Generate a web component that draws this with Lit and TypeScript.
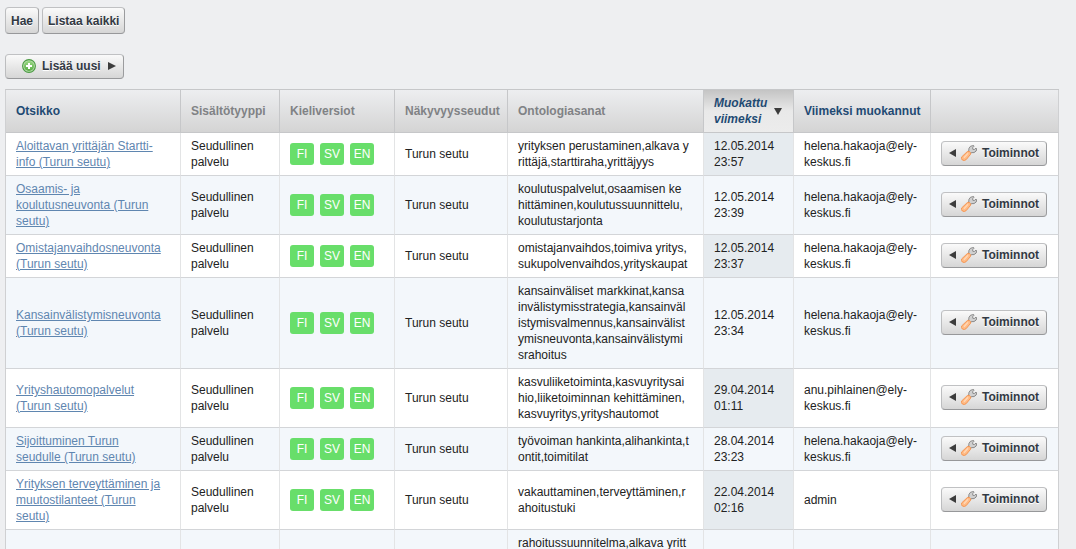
import { LitElement, html, css, svg } from "lit";
import { customElement, property } from "lit/decorators.js";

interface Service {
  title: string[];
  words: string[];
  modified?: string[];
  editor?: string[];
}

const helena = ["helena.hakaoja@ely-", "keskus.fi"];

const services: Service[] = [
  {
    title: ["Aloittavan yrittäjän Startti-", "info (Turun seutu)"],
    words: ["yrityksen perustaminen,alkava y", "rittäjä,starttiraha,yrittäjyys"],
    modified: ["12.05.2014", "23:57"],
    editor: helena,
  },
  {
    title: ["Osaamis- ja", "koulutusneuvonta (Turun", "seutu)"],
    words: ["koulutuspalvelut,osaamisen ke", "hittäminen,koulutussuunnittelu,", "koulutustarjonta"],
    modified: ["12.05.2014", "23:39"],
    editor: helena,
  },
  {
    title: ["Omistajanvaihdosneuvonta", "(Turun seutu)"],
    words: ["omistajanvaihdos,toimiva yritys,", "sukupolvenvaihdos,yrityskaupat"],
    modified: ["12.05.2014", "23:37"],
    editor: helena,
  },
  {
    title: ["Kansainvälistymisneuvonta", "(Turun seutu)"],
    words: [
      "kansainväliset markkinat,kansa",
      "invälistymisstrategia,kansainväl",
      "istymisvalmennus,kansainvälist",
      "ymisneuvonta,kansainvälistymi",
      "srahoitus",
    ],
    modified: ["12.05.2014", "23:34"],
    editor: helena,
  },
  {
    title: ["Yrityshautomopalvelut", "(Turun seutu)"],
    words: ["kasvuliiketoiminta,kasvuyritysai", "hio,liiketoiminnan kehittäminen,", "kasvuyritys,yrityshautomot"],
    modified: ["29.04.2014", "01:11"],
    editor: ["anu.pihlainen@ely-", "keskus.fi"],
  },
  {
    title: ["Sijoittuminen Turun", "seudulle (Turun seutu)"],
    words: ["työvoiman hankinta,alihankinta,t", "ontit,toimitilat"],
    modified: ["28.04.2014", "23:23"],
    editor: helena,
  },
  {
    title: ["Yrityksen terveyttäminen ja", "muutostilanteet (Turun", "seutu)"],
    words: ["vakauttaminen,terveyttäminen,r", "ahoitustuki"],
    modified: ["22.04.2014", "02:16"],
    editor: ["admin"],
  },
];

const lines = (parts: string[] = []) => parts.map((part, i) => (i ? html`<br />${part}` : part));

const plusIcon = svg`<svg width="14" height="14" viewBox="0 0 14 14" aria-hidden="true">
  <defs><linearGradient id="g" x1="0" y1="0" x2="0" y2="1"><stop offset="0" stop-color="#9ad884"/><stop offset="1" stop-color="#57ac44"/></linearGradient></defs>
  <circle cx="7" cy="7" r="6.4" fill="#b9dfae" stroke="#4a9a42" stroke-width="1.1"/>
  <circle cx="7" cy="7" r="5" fill="url(#g)"/>
  <path d="M7 4v6M4 7h6" stroke="#fff" stroke-width="2"/>
</svg>`;

const wrenchIcon = svg`<svg width="16" height="16" viewBox="0 0 16 16" aria-hidden="true">
  <path d="M7.6 6.7 8 3.2 9.6 1.2 12.6.5 13 1.2 11.6 2.8 11.9 4.4 13.6 4.4 15 3 15.6 3.6 15.2 6 13 7.6 10.4 7.6 9.2 9z" fill="#d0d0d0" stroke="#808080" stroke-width=".9" stroke-linejoin="round"/>
  <path d="M6.4 6.5Q8.6 5.8 9.4 7.4T9.2 9.8L5.2 14.6Q3.2 16.2 1.4 15T.8 11.8z" fill="#ffbb86" stroke="#f5904a" stroke-width=".9" stroke-linejoin="round"/>
  <path d="M7 8.4 3 12.8" stroke="#ffd9b8" stroke-width="1.4"/>
</svg>`;

@customElement("app-root")
export class AppRoot extends LitElement {
  @property({ attribute: false }) services = services;

  static styles = css`
    :host {
      display: block;
      box-sizing: border-box;
      height: 100vh;
      overflow: hidden;
      padding: 7px 17px 0 5px;
      background: #eeeff1;
      color: #222;
      font: 12px/16px "Liberation Sans", Arial, sans-serif;
    }
    .search {
      display: flex;
      gap: 3px;
      margin-bottom: 20px;
    }
    .btn {
      display: flex;
      align-items: center;
      box-sizing: border-box;
      height: 25px;
      margin: 0;
      padding: 0 7px 1px;
      border: 1px solid;
      border-color: #c0c1c3 #9b9c9e #97989a #bcbdbf;
      border-radius: 4px;
      background: linear-gradient(#fafafa, #d6d6d6);
      color: #323943;
      font: bold 12px/16px "Liberation Sans", Arial, sans-serif;
      white-space: nowrap;
      text-shadow: 0 1px 0 #fff;
      cursor: pointer;
    }
    .btn.plain {
      height: 27px;
      padding: 0 5px;
    }
    .btn.add {
      gap: 6px;
      margin-bottom: 10px;
      padding-left: 16px;
    }
    .btn.add span {
      margin-right: 1px;
    }
    .btn.actions {
      gap: 5px;
    }
    .btn svg {
      display: block;
      flex: none;
    }
    .grid {
      width: 100%;
      table-layout: fixed;
      border-collapse: separate;
      border-spacing: 0;
      border-top: 1px solid #c6c7c9;
      border-left: 1px solid #cfd0d2;
    }
    .c-title { width: 175px; }
    .c-type { width: 99px; }
    .c-lang { width: 115px; }
    .c-area { width: 113px; }
    .c-date { width: 90px; }
    .c-user { width: 137px; }
    .c-act { width: 128px; }
    th,
    td {
      box-sizing: border-box;
      padding: 5px 10px;
      border-right: 1px solid #e3e4e5;
      border-bottom: 1px solid #d3d5d8;
      text-align: left;
      vertical-align: middle;
      white-space: nowrap;
    }
    th {
      height: 43px;
      border-color: #c6c7c9;
      background: linear-gradient(#edeef0, #d4d4d4);
      color: #808285;
    }
    th.sortable {
      color: #1f4a73;
    }
    th.sorted {
      background: linear-gradient(#c4c4c4, #e9e9e9 50%, #ececec);
      font-style: italic;
    }
    .sort {
      display: flex;
      align-items: center;
      gap: 7px;
    }
    td {
      background: #fff;
    }
    tr:nth-child(even) td {
      background: #f3f7fb;
    }
    tr:nth-child(odd) td.date {
      background: #e6ebef;
    }
    td:last-child,
    th:last-child {
      border-right-color: #cfd0d2;
    }
    td.act {
      padding-top: 0;
      padding-bottom: 1px;
    }
    .link {
      color: #5f86b0;
      text-decoration: underline;
    }
    .langs {
      display: flex;
      gap: 6px;
    }
    .lang {
      width: 24px;
      border-radius: 3px;
      background: #68de6a;
      color: #fff;
      line-height: 22px;
      text-align: center;
    }
    .partial {
      height: 91px;
      vertical-align: top;
    }
  `;

  private renderRow(s: Service) {
    return html`<tr>
      <td><a class="link" href="#">${lines(s.title)}</a></td>
      <td>Seudullinen<br />palvelu</td>
      <td><div class="langs">${["FI", "SV", "EN"].map((l) => html`<span class="lang">${l}</span>`)}</div></td>
      <td>Turun seutu</td>
      <td>${lines(s.words)}</td>
      <td class="date">${lines(s.modified)}</td>
      <td>${lines(s.editor)}</td>
      <td class="act">
        <button class="btn actions" type="button">
          <svg width="7" height="8" viewBox="0 0 7 8" aria-hidden="true"><path d="M7 0v8L0 4z" fill="#3c3c3c" /></svg>
          ${wrenchIcon}<span>Toiminnot</span>
        </button>
      </td>
    </tr>`;
  }

  render() {
    return html`
      <div class="search">
        <button class="btn plain" type="button">Hae</button>
        <button class="btn plain" type="button">Listaa kaikki</button>
      </div>
      <button class="btn add" type="button">
        ${plusIcon}<span>Lisää uusi</span>
        <svg width="8" height="8" viewBox="0 0 8 8" aria-hidden="true"><path d="M0 0v8l8-4z" fill="#3c3c3c" /></svg>
      </button>
      <table class="grid">
        <colgroup>
          <col class="c-title" /><col class="c-type" /><col class="c-lang" /><col class="c-area" />
          <col /><col class="c-date" /><col class="c-user" /><col class="c-act" />
        </colgroup>
        <thead>
          <tr>
            <th class="sortable">Otsikko</th>
            <th>Sisältötyyppi</th>
            <th>Kieliversiot</th>
            <th>Näkyvyysseudut</th>
            <th>Ontologiasanat</th>
            <th class="sortable sorted" aria-sort="descending">
              <div class="sort">
                <span>Muokattu<br />viimeksi</span>
                <svg width="8" height="7" viewBox="0 0 8 7" aria-hidden="true"><path d="M0 0h8L4 7z" fill="#3c3c3c" /></svg>
              </div>
            </th>
            <th class="sortable">Viimeksi muokannut</th>
            <th></th>
          </tr>
        </thead>
        <tbody>
          ${this.services.map((s) => this.renderRow(s))}
          <tr>
            <td></td><td></td><td></td><td></td>
            <td class="partial">rahoitussuunnitelma,alkava yritt</td>
            <td></td><td></td><td></td>
          </tr>
        </tbody>
      </table>
    `;
  }
}
